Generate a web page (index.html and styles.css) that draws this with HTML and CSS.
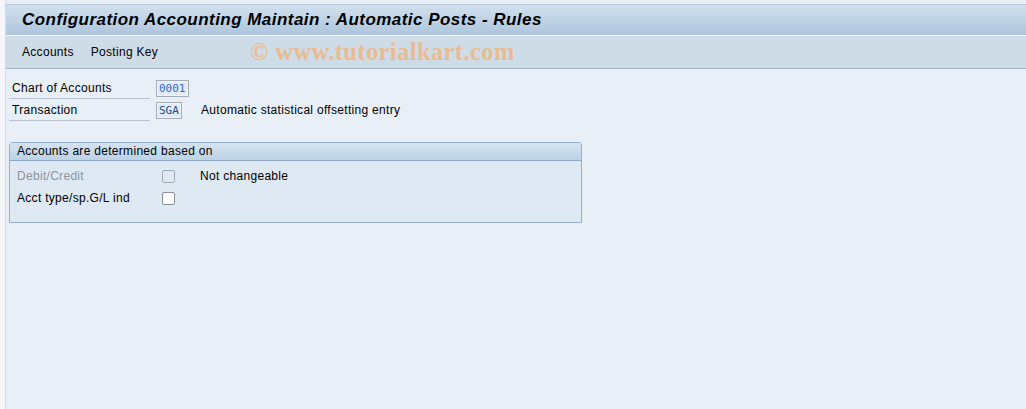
FILE: index.html
```html
<!DOCTYPE html>
<html lang="en">
<head>
    <meta charset="UTF-8">
    <title>Configuration Accounting Maintain : Automatic Posts - Rules</title>
    <link rel="stylesheet" href="styles.css">
</head>
<body>
    <div class="window">
        <div class="title-bar">
            <h1>Configuration Accounting Maintain : Automatic Posts - Rules</h1>
        </div>
        <div class="toolbar">
            <span class="menu-item">Accounts</span>
            <span class="menu-item">Posting Key</span>
            <span class="watermark">&copy; www.tutorialkart.com</span>
        </div>
        <div class="content">
            <div class="field-row">
                <label class="field-label">Chart of Accounts</label>
                <span class="field-value value-blue">0001</span>
            </div>
            <div class="field-row">
                <label class="field-label">Transaction</label>
                <span class="field-value value-short">SGA</span>
                <span class="field-text">Automatic statistical offsetting entry</span>
            </div>

            <div class="group">
                <div class="group-header">Accounts are determined based on</div>
                <div class="group-body">
                    <div class="check-row">
                        <span class="check-label disabled">Debit/Credit</span>
                        <span class="checkbox checkbox-disabled"></span>
                        <span class="check-note">Not changeable</span>
                    </div>
                    <div class="check-row">
                        <span class="check-label">Acct type/sp.G/L ind</span>
                        <span class="checkbox"></span>
                    </div>
                </div>
            </div>
        </div>
    </div>
</body>
</html>
```

FILE: styles.css
```css
body {
    margin: 0;
    background-color: #f4f6f9;
    font-family: Tahoma, "Liberation Sans", Arial, sans-serif;
    font-size: 12px;
    letter-spacing: 0.3px;
    color: #000;
}
.window {
    margin-left: 5px;
    height: 409px;
    border-left: 1px solid #d3dbe4;
    background-color: #e8eff7;
    box-sizing: border-box;
    padding-top: 4px;
}
.title-bar {
    height: 32px;
    border-top: 1px solid #b9c8d8;
    border-bottom: 1px solid #f4f8fb;
    background: linear-gradient(to bottom, #d1e0ed, #adc5dd);
    box-sizing: border-box;
    display: flex;
    align-items: center;
    padding-left: 16px;
}
h1 {
    margin: 0;
    font-size: 17px;
    font-weight: bold;
    font-style: italic;
    color: #000;
    letter-spacing: 0.46px;
}
.toolbar {
    height: 33px;
    background-color: #cedce8;
    border-bottom: 1px solid #a7b8ca;
    box-sizing: border-box;
    display: flex;
    align-items: center;
    padding-left: 16px;
}
.menu-item {
    margin-right: 17px;
}
.watermark {
    margin-left: 75px;
    font-family: "Liberation Serif", "Times New Roman", serif;
    font-size: 24.5px;
    font-weight: bold;
    color: #e9bb90;
    letter-spacing: 0.4px;
}
.content {
    padding: 8px 0 0 3px;
}
.field-row {
    display: flex;
    align-items: center;
    height: 22px;
}
.field-label {
    width: 141px;
    padding-left: 3px;
    box-sizing: border-box;
    border-bottom: 1px solid #b8c3ce;
    line-height: 20px;
    margin-right: 6px;
}
.field-value {
    font-family: "DejaVu Sans Mono", "Liberation Mono", monospace;
    font-size: 11px;
    letter-spacing: 0;
    height: 17px;
    line-height: 15px;
    padding: 0 2px;
    border: 1px solid #a4acb6;
    box-shadow: inset 0 0 0 1px #f0f4f8;
    background-color: #e3ecf6;
    box-sizing: border-box;
    width: 33px;
}
.value-blue {
    color: #2b6cc4;
}
.value-short {
    width: 26px;
    color: #1f4d87;
}
.field-text {
    margin-left: 19px;
}
.group {
    margin-top: 21px;
    width: 573px;
    border: 1px solid #97afc8;
    border-radius: 3px 3px 0 0;
    box-sizing: border-box;
}
.group-header {
    height: 17px;
    line-height: 16px;
    padding-left: 7px;
    background: linear-gradient(to bottom, #d4e3f0, #bed3e7);
    border-bottom: 1px solid #8ea8c2;
}
.group-body {
    background-color: #dee9f3;
    height: 61px;
    padding-top: 4px;
    padding-left: 7px;
    box-sizing: border-box;
}
.check-row {
    display: flex;
    align-items: center;
    height: 22px;
}
.check-label {
    width: 145px;
}
.disabled {
    color: #8d949b;
}
.checkbox {
    width: 13px;
    height: 13px;
    border: 1px solid #8a9096;
    border-radius: 2px;
    background-color: #fff;
    box-sizing: border-box;
}
.checkbox-disabled {
    background-color: #dee9f3;
    border-color: #a3a9b0;
}
.check-note {
    margin-left: 25px;
}
```
